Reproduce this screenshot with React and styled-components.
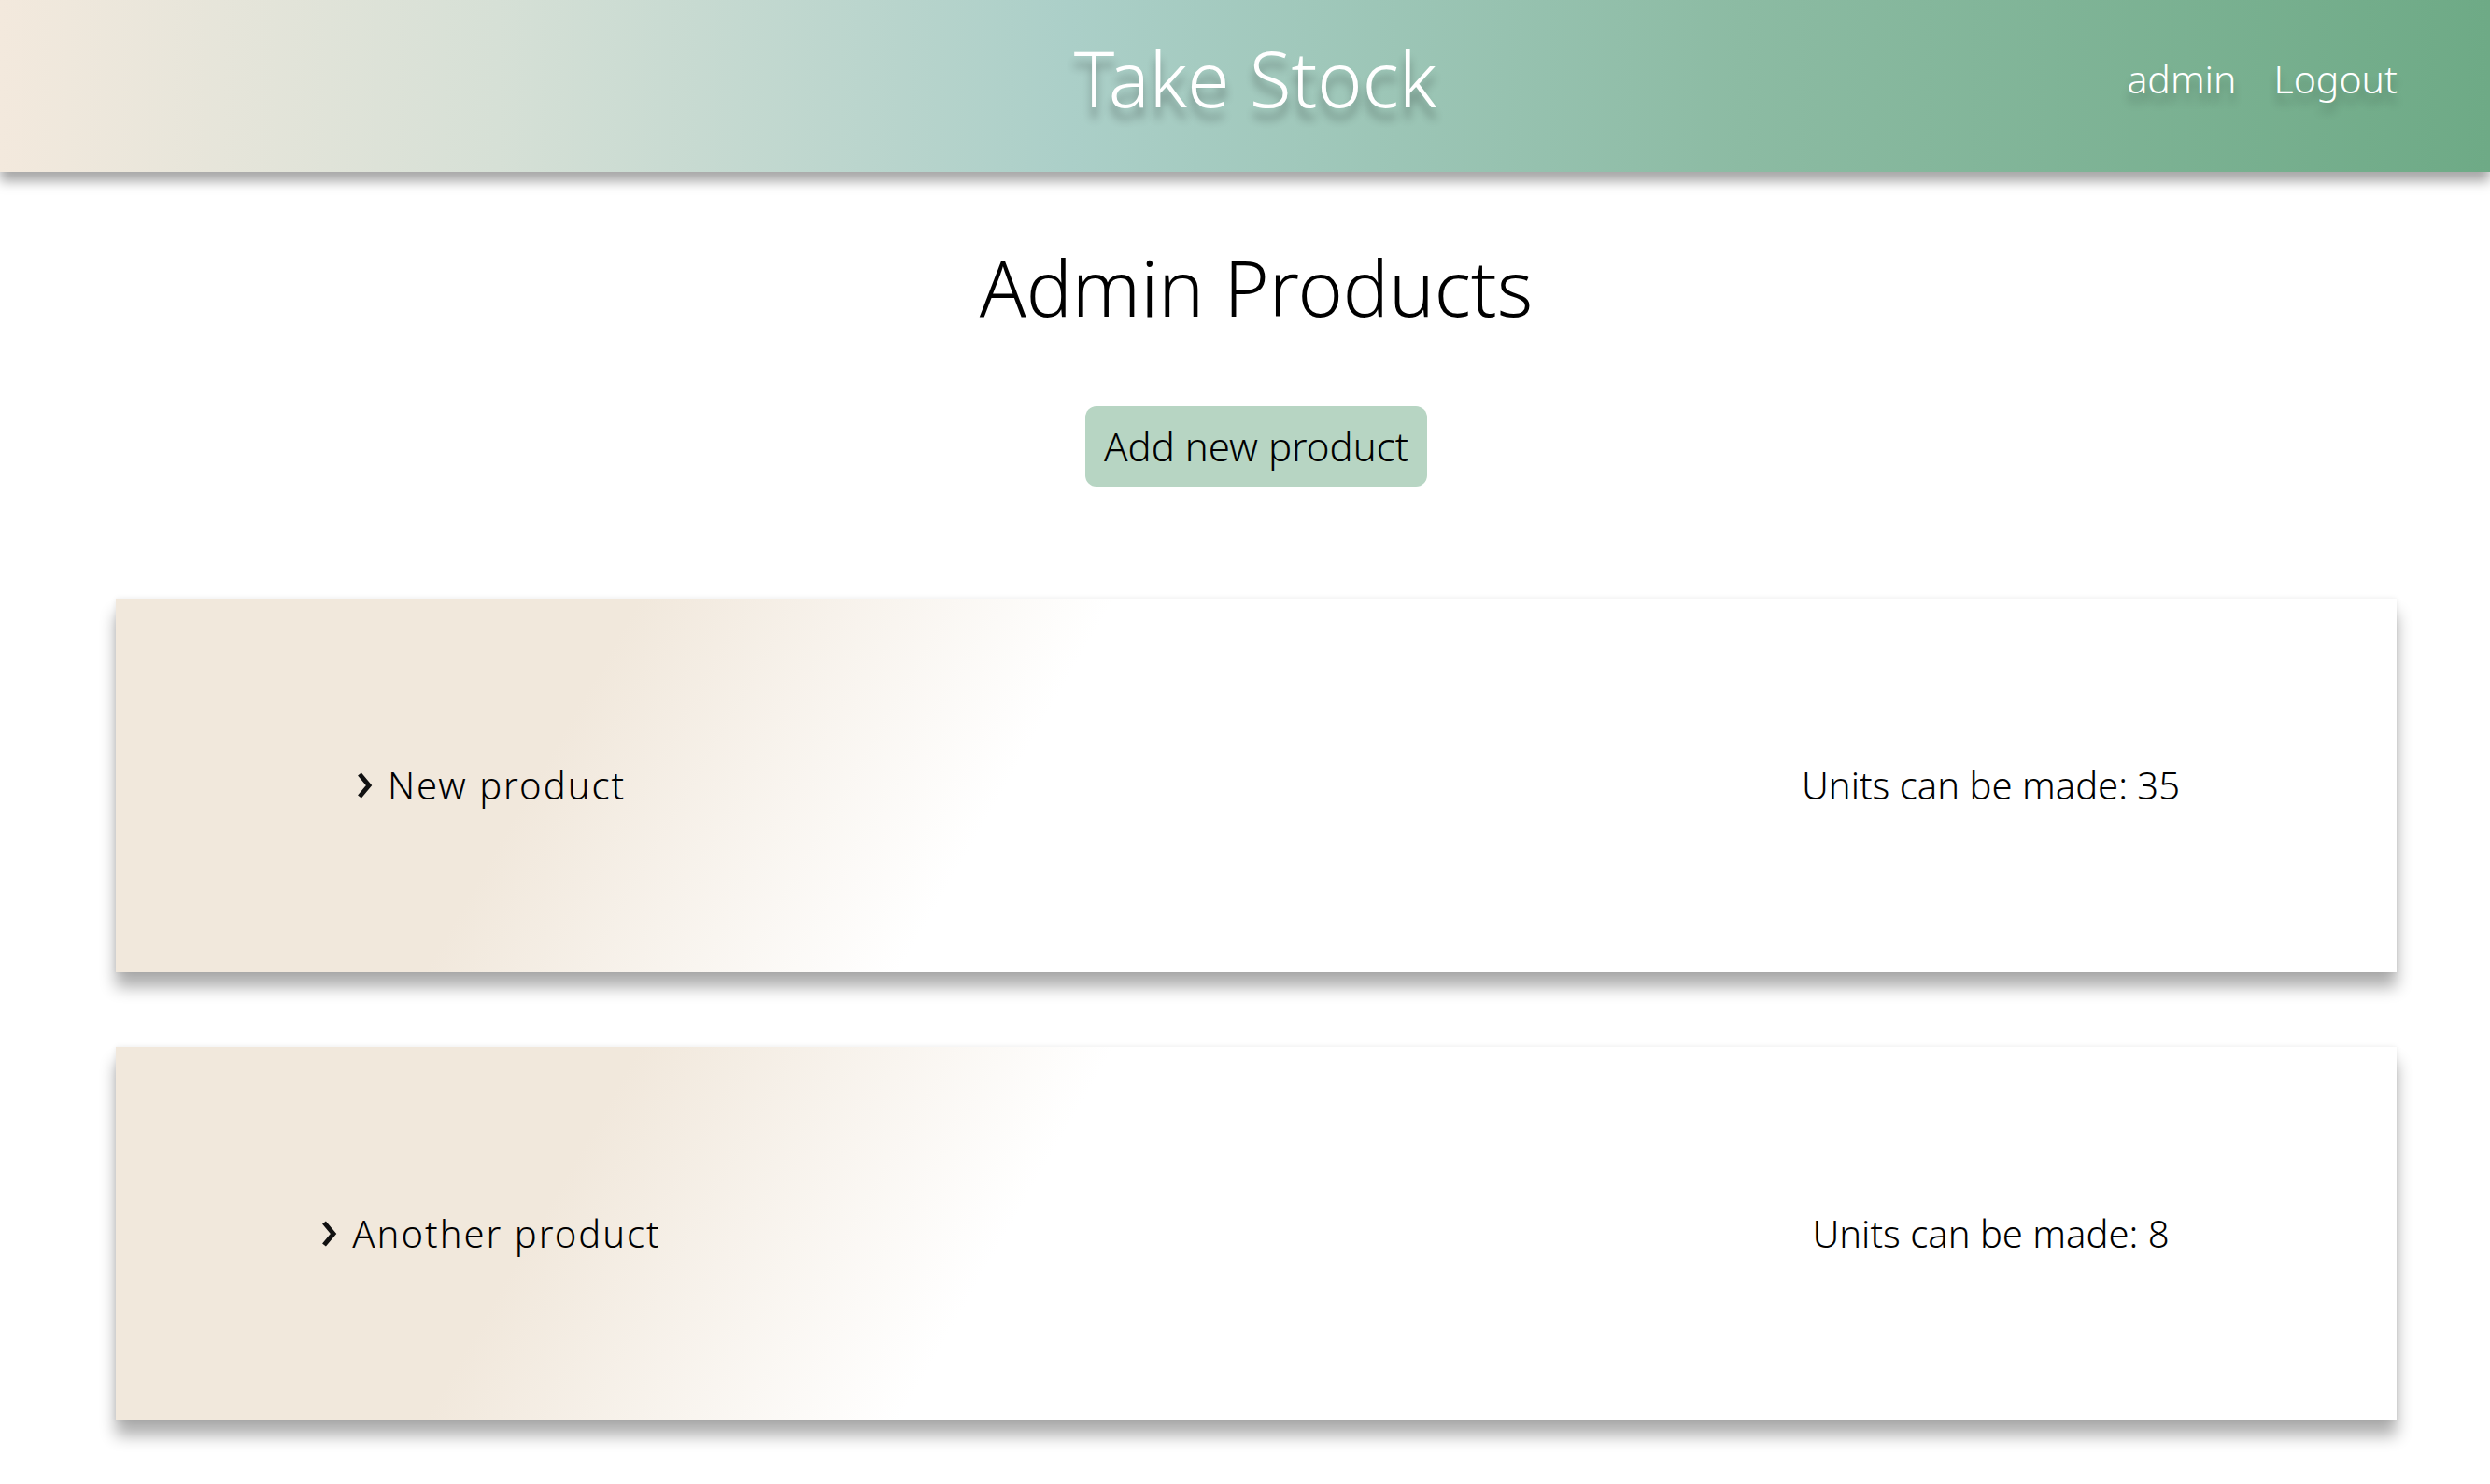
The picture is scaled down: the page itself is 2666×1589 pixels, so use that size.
import React from 'react';
import styled, { createGlobalStyle } from 'styled-components';

const products = [
  { id: 1, name: 'New product', units: 35 },
  { id: 2, name: 'Another product', units: 8 },
];

const GlobalStyle = createGlobalStyle`
  body {
    margin: 0;
    background: #ffffff;
    font-family: "Noto Sans", "Open Sans", sans-serif;
    font-weight: 300;
    color: #000;
  }
`;

const Chevron = () => (
  <svg width="18" height="30" viewBox="0 0 18 30" aria-hidden="true">
    <path d="M4 3 L14 15 L4 27" fill="none" stroke="#111" strokeWidth="5" strokeLinejoin="miter" />
  </svg>
);

const App = () => {
  return (
    <>
      <GlobalStyle />
      <Header>
        <Spacer />
        <Brand>Take Stock</Brand>
        <Nav>
          <NavLink>admin</NavLink>
          <NavLink>Logout</NavLink>
        </Nav>
      </Header>
      <Main>
        <Title>Admin Products</Title>
        <AddButton>Add new product</AddButton>
        <ProductList>
          {products.map((product) => (
            <ProductCard key={product.id}>
              <ProductName>
                <Chevron />
                <span>{product.name}</span>
              </ProductName>
              <span />
              <Units>Units can be made: {product.units}</Units>
            </ProductCard>
          ))}
        </ProductList>
      </Main>
    </>
  );
};

const Header = styled.header`
  height: 184px;
  display: grid;
  grid-template-columns: 1fr auto 1fr;
  align-items: center;
  background: linear-gradient(to right, #f3e9dd 0%, #d6e0d6 20%, #abcfc8 43%, #8cbba3 70%, #6eaa86 100%);
  box-shadow: 0 10px 12px rgba(0, 0, 0, 0.35);
  position: relative;
  z-index: 1;
`;

const Spacer = styled.div``;

const Brand = styled.h1`
  margin: 0 0 0 22px;
  padding-bottom: 18px;
  font-size: 82px;
  font-weight: 300;
  color: #ffffff;
  text-shadow: 0 12px 10px rgba(0, 0, 0, 0.3);
`;

const Nav = styled.nav`
  display: flex;
  justify-content: flex-end;
  gap: 40px;
  padding: 0 99px 16px 0;
`;

const NavLink = styled.a`
  font-size: 41px;
  color: #ffffff;
  text-shadow: 0 10px 10px rgba(0, 0, 0, 0.25);
  cursor: pointer;
`;

const Main = styled.main`
  display: flex;
  flex-direction: column;
  align-items: center;
  padding: 0 100px 80px 124px;
`;

const Title = styled.h2`
  margin: 70px 0 0;
  font-size: 82px;
  font-weight: 300;
  line-height: 1.3;
`;

const AddButton = styled.button`
  margin-top: 74px;
  height: 86px;
  padding: 0 20px;
  border: none;
  border-radius: 12px;
  background: #b7d5c3;
  font-family: inherit;
  font-weight: 300;
  font-size: 42px;
  color: #000;
  cursor: pointer;
`;

const ProductList = styled.div`
  align-self: stretch;
  margin-top: 120px;
  display: flex;
  flex-direction: column;
  gap: 80px;
`;

const ProductCard = styled.div`
  height: 400px;
  display: grid;
  grid-template-columns: 1fr 1fr 1fr;
  align-items: center;
  padding-right: 33px;
  background: linear-gradient(120deg, #f1e8dc 21%, #ffffff 40%);
  box-shadow: 0 16px 16px rgba(0, 0, 0, 0.32), 0 0 6px rgba(0, 0, 0, 0.08);
`;

const ProductName = styled.div`
  display: flex;
  align-items: center;
  justify-content: center;
  gap: 16px;
  font-size: 40px;
  letter-spacing: 2px;
`;

const Units = styled.div`
  text-align: center;
  font-size: 40px;
`;

export default App;
